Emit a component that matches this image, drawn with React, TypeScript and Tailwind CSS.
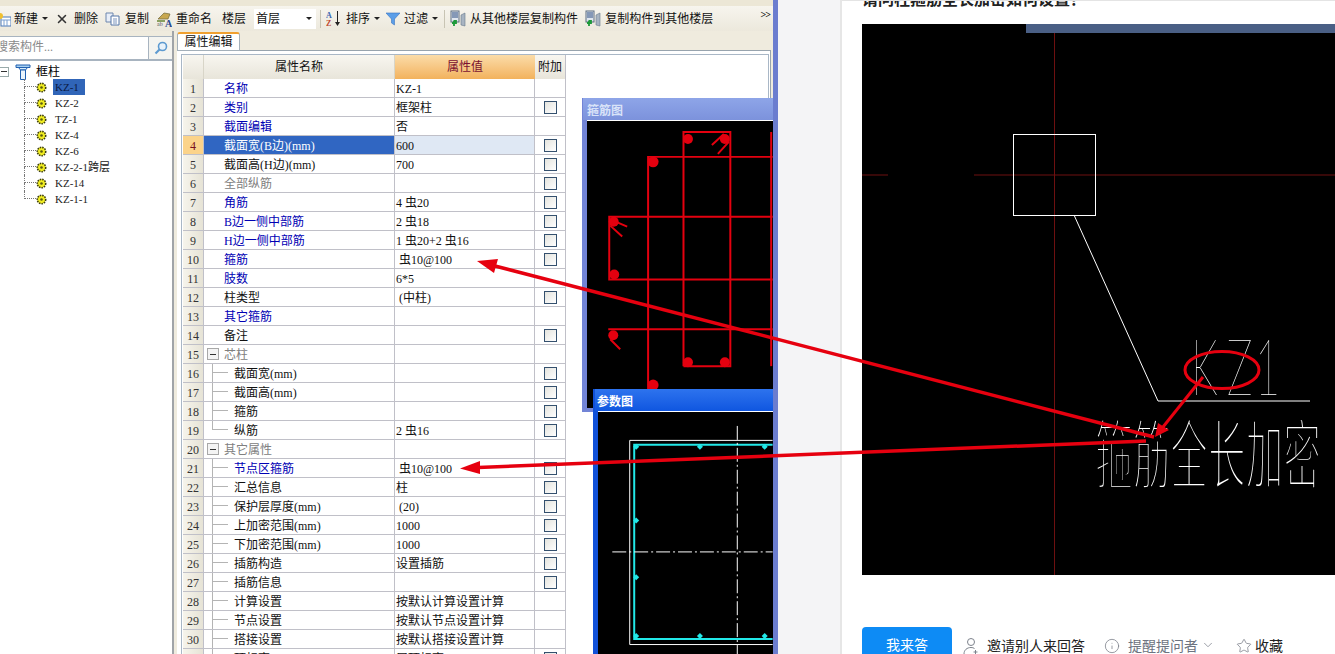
import React from 'react';
import { X, Info, ChevronDown, Star } from 'lucide-react';

const Caret = () => (
	<span className="w-0 h-0 border-x-[3px] border-x-transparent border-t-[3px] border-t-[#222] shrink-0" />
);

const NewIcon = () => (
	<svg width="14" height="16" viewBox="0 0 14 16" className="shrink-0">
		<rect x="4" y="6" width="10" height="9" fill="#fff" stroke="#4a78b8" />
		<path d="M4 9h10M7 9v6M10 9v6" stroke="#7aa0d0" />
		<circle cx="3" cy="5" r="3" fill="#f0c030" />
	</svg>
);

const CopyIcon = () => (
	<svg width="15" height="14" viewBox="0 0 15 14" className="shrink-0">
		<path d="M1 1h7v9H1z" fill="#e8eef8" stroke="#6c86ad" />
		<path d="M6 4h8v9H6z" fill="#fff" stroke="#5577a8" />
		<path d="M8 7h4M8 9h4M8 11h4" stroke="#7a94bd" />
	</svg>
);

const RenameIcon = () => (
	<svg width="16" height="16" viewBox="0 0 16 16" className="shrink-0">
		<path d="M2 8 L8 2 L14 3 L12 8 Z" fill="#c8a850" stroke="#70683a" strokeWidth="0.7" />
		<path d="M1 9h8v2H1z" fill="#8aa060" />
		<text x="1" y="15" fontSize="6" fill="#556">ab</text>
		<text x="9" y="16" fontSize="10" fontWeight="700" fill="#2a4a90">A</text>
	</svg>
);

const SortIcon = () => (
	<svg width="16" height="17" viewBox="0 0 16 17" className="shrink-0">
		<text x="0" y="8" fontSize="8" fontWeight="700" fill="#3a64b0">A</text>
		<text x="0" y="16" fontSize="8" fontWeight="700" fill="#c04a30">Z</text>
		<path d="M11.5 1v13" stroke="#222" />
		<path d="M9 12l2.5 4 2.5-4z" fill="#222" />
	</svg>
);

const FilterIcon = () => (
	<svg width="14" height="14" viewBox="0 0 14 14" className="shrink-0">
		<path d="M0 1h14L8.5 7v6l-3-2V7z" fill="#5b9ee8" stroke="#3a74c0" strokeWidth="0.6" />
	</svg>
);

const LayerCopyIcon = () => (
	<svg width="16" height="17" viewBox="0 0 16 17" className="shrink-0">
		<rect x="1" y="1" width="8" height="11" fill="#dfe6ee" stroke="#5c6c80" />
		<path d="M2 3h6M2 5h6M2 7h6" stroke="#2a4a80" />
		<path d="M11 5l4-2v13l-4 -1z" fill="#a8b4c2" stroke="#66788c" strokeWidth="0.6" />
		<path d="M2 13h4v-2l-2.500 0M4 11v5" stroke="#1d9a3a" strokeWidth="1.800" fill="none" />
	</svg>
);

const Gear = () => (
	<svg width="11" height="11" viewBox="0 0 11 11" className="shrink-0">
		<circle cx="5.500" cy="5.500" r="4.200" fill="#f2ee20" stroke="#3a3a10" strokeWidth="1.600" strokeDasharray="1.500 1" />
		<circle cx="5.500" cy="5.500" r="1.300" fill="#5a5a10" />
	</svg>
);

const treeItems = ['KZ-1', 'KZ-2', 'TZ-1', 'KZ-4', 'KZ-6', 'KZ-2-1跨层', 'KZ-14', 'KZ-1-1'];

const Tree = () => (
	<div className="pt-[3px]">
		<div className="flex items-center h-[15px] -ml-[1px]">
			<span className="w-[10px] h-[10px] border border-[#9aa] flex items-center justify-center shrink-0">
				<span className="w-[6px] h-px bg-[#333]" />
			</span>
			<svg width="16" height="16" viewBox="0 0 16 16" className="ml-[6px] shrink-0">
				<path d="M1 1h14v2.500H1z" fill="#a8d0f0" stroke="#1f5fb0" />
				<path d="M3.500 3.500h9L10.500 6h-5z" fill="#d8ecfa" stroke="#1f5fb0" />
				<path d="M5.500 6h5v9.500h-5z" fill="#eaf4fc" stroke="#1f5fb0" />
			</svg>
			<span className="ml-[5px] text-[12px] text-black">框柱</span>
		</div>
		{treeItems.map((name, i) => (
			<div key={name} className="flex items-center h-4 ml-[24px]">
				<span className="w-[12px] h-4 flex flex-col shrink-0">
					<span className="h-2 border-l border-b border-dotted border-[#777]" />
					{i < treeItems.length - 1 && <span className="h-2 border-l border-dotted border-[#777]" />}
				</span>
				<Gear />
				<span
					className={
						i === 0
							? 'ml-[6px] h-4 pl-[2px] pr-[6px] flex items-center text-[11px] bg-[#3065b8] text-[#0b1a44]'
							: 'ml-[6px] h-4 pl-[2px] flex items-center text-[11px] text-[#222]'
					}
				>
					{name}
				</span>
			</div>
		))}
	</div>
);

type RowData = {
	name: string;
	value?: string;
	tone?: 'blue' | 'black' | 'gray';
	check?: boolean;
	group?: boolean;
	child?: boolean;
	last?: boolean;
};

const rows: RowData[] = [
	{ name: '名称', value: 'KZ-1', tone: 'blue' },
	{ name: '类别', value: '框架柱', tone: 'blue', check: true },
	{ name: '截面编辑', value: '否', tone: 'blue' },
	{ name: '截面宽(B边)(mm)', value: '600', check: true },
	{ name: '截面高(H边)(mm)', value: '700', check: true },
	{ name: '全部纵筋', tone: 'gray', check: true },
	{ name: '角筋', value: '4 虫20', tone: 'blue', check: true },
	{ name: 'B边一侧中部筋', value: '2 虫18', tone: 'blue', check: true },
	{ name: 'H边一侧中部筋', value: '1 虫20+2 虫16', tone: 'blue', check: true },
	{ name: '箍筋', value: ' 虫10@100', tone: 'blue', check: true },
	{ name: '肢数', value: '6*5', tone: 'blue' },
	{ name: '柱类型', value: ' (中柱)', check: true },
	{ name: '其它箍筋', tone: 'blue' },
	{ name: '备注', check: true },
	{ name: '芯柱', tone: 'gray', group: true },
	{ name: '截面宽(mm)', child: true, check: true },
	{ name: '截面高(mm)', child: true, check: true },
	{ name: '箍筋', child: true, check: true },
	{ name: '纵筋', value: '2 虫16', child: true, check: true, last: true },
	{ name: '其它属性', tone: 'gray', group: true },
	{ name: '节点区箍筋', value: ' 虫10@100', tone: 'blue', child: true, check: true },
	{ name: '汇总信息', value: '柱', child: true, check: true },
	{ name: '保护层厚度(mm)', value: ' (20)', child: true, check: true },
	{ name: '上加密范围(mm)', value: '1000', child: true, check: true },
	{ name: '下加密范围(mm)', value: '1000', child: true, check: true },
	{ name: '插筋构造', value: '设置插筋', child: true, check: true },
	{ name: '插筋信息', child: true, check: true },
	{ name: '计算设置', value: '按默认计算设置计算', child: true },
	{ name: '节点设置', value: '按默认节点设置计算', child: true },
	{ name: '搭接设置', value: '按默认搭接设置计算', child: true },
	{ name: '顶标高(m)', value: '层顶标高', child: true, check: true },
];

const toneClass = { blue: 'text-[#0000b4]', black: 'text-[#111]', gray: 'text-[#808080]' };

const PropRow = ({ row, index }: { row: RowData; index: number }) => {
	const selected = index === 4;
	return (
		<div className="grid grid-cols-[21px_191px_140px_31px] grid-rows-[19px] h-[19px] text-[12px] leading-[18px]">
			<div
				className={
					selected
						? 'border-r border-b border-[#c0c0c8] bg-[#fbd38a] pt-px text-center text-[#7a1020]'
						: 'border-r border-b border-[#c0c0c8] bg-gradient-to-r from-[#f6f4ec] to-[#e6e3d6] pt-px text-center text-[#333]'
				}
			>
				{index}
			</div>
			<div
				className={
					selected
						? 'border-r border-b border-[#c0c0c8] bg-[#3066c2] text-white flex items-center pl-[20px]'
						: `border-r border-b border-[#c0c0c8] flex items-center ${toneClass[row.tone ?? 'black']} ${row.group || row.child ? '' : 'pl-[20px]'}`
				}
			>
				{row.group && (
					<span className="ml-[3px] mr-[5px] w-3 h-3 border border-[#a8a8a8] bg-[#f4f4f4] flex items-center justify-center shrink-0">
						<span className="w-[6px] h-px bg-[#333]" />
					</span>
				)}
				{row.child && (
					<span className="ml-[8px] mr-[6px] w-[16px] h-[18px] flex flex-col shrink-0">
						<span className="h-[9px] border-l border-b border-[#b4b4b4]" />
						{!row.last && <span className="h-[9px] border-l border-[#b4b4b4]" />}
					</span>
				)}
				<span className="whitespace-nowrap mt-[2px]">{row.name}</span>
			</div>
			<div
				className={
					selected
						? 'border-r border-b border-[#c0c0c8] bg-[#dfe8f4] pl-px pt-px whitespace-pre text-[#111]'
						: 'border-r border-b border-[#c0c0c8] pl-px pt-px whitespace-pre text-[#111]'
				}
			>
				{row.value}
			</div>
			<div className="border-r border-b border-[#c0c0c8] flex items-center justify-center">
				{row.check && (
					<span className="w-[13px] h-[13px] border border-[#34506e] bg-gradient-to-br from-[#e4e4de] to-white" />
				)}
			</div>
		</div>
	);
};

const StirrupWindow = () => (
	<div className="absolute left-[582px] top-[98px] w-[191px] h-[314px] bg-[#7284d6] pl-[5px] pb-[4px] overflow-hidden">
		<div className="h-[22px] -ml-[4px] pl-[4px] bg-gradient-to-b from-[#8ea5e8] to-[#7c92dc] text-[12px] leading-[26px] font-bold text-[#d8e2f8]">
			箍筋图
		</div>
		<svg width="186" height="288" viewBox="587 122 186 288" className="block bg-black border-t border-white">
			<g stroke="#e4000f" strokeWidth="2" fill="none">
				<path d="M773 158H648V395" />
				<path d="M771.500 133V368" />
				<path d="M683.500 368V133H730.500V368H683.500" strokeWidth="2" />
				<path d="M773 218H609V281H773" />
				<path d="M608 331H773" />
				<path d="M712 146L724 135M718 155L729 143M613 222L627 228M610 227L622 238M610 341L620 351" />
			</g>
			<g fill="#e4000f">
				<circle cx="688" cy="140" r="5" />
				<circle cx="725" cy="140" r="5" />
				<circle cx="653" cy="163" r="5.500" />
				<circle cx="613.500" cy="223" r="5" />
				<circle cx="614" cy="276" r="5" />
				<circle cx="613" cy="337" r="5" />
				<circle cx="688" cy="364" r="5" />
				<circle cx="725" cy="364" r="5" />
				<circle cx="653" cy="387" r="5.500" />
			</g>
		</svg>
	</div>
);

const ParamWindow = () => (
	<div className="absolute left-[593px] top-[389px] w-[180px] h-[265px] bg-[#1151d8] pl-[5px] overflow-hidden">
		<div className="h-[22px] -ml-[3px] pl-[2px] bg-gradient-to-b from-[#2d73ee] to-[#0f56e0] text-[12px] leading-[26px] font-bold text-white">
			参数图
		</div>
		<svg width="175" height="243" viewBox="598 411 175 243" className="block bg-black border-t border-white">
			<path d="M773 439.500H629.500V644.500H773" stroke="#fff" fill="none" />
			<path d="M773 444H634V639H773" stroke="#22e8e8" strokeWidth="2" fill="none" />
			<path d="M737.500 425V654" stroke="#fff" strokeDasharray="14 3 2 3" />
			<path d="M612 551.500H773" stroke="#fff" strokeDasharray="14 3 2 3" />
			<g fill="#22e8e8">
				<path d="M636 443l3 3-3 3-3-3z" />
				<path d="M700 443l3 3-3 3-3-3z" />
				<path d="M765 443l3 3-3 3-3-3z" />
				<path d="M636 517l3 3-3 3-3-3z" />
				<path d="M636 574l3 3-3 3-3-3z" />
				<path d="M636 633l3 3-3 3-3-3z" />
				<path d="M700 633l3 3-3 3-3-3z" />
				<path d="M765 633l3 3-3 3-3-3z" />
			</g>
		</svg>
	</div>
);

const Software = () => (
	<div className="relative w-[773px] shrink-0 flex flex-col bg-[#efebde] overflow-hidden">
		<div className="h-[6px] bg-[#ece7d6] shrink-0" />
		<div className="h-[25px] shrink-0 flex items-center text-[12px] text-[#111] whitespace-nowrap bg-gradient-to-b from-[#f7f5ee] to-[#ece8dc]">
			<span className="-ml-[3px] flex"><NewIcon /></span>
			<span className="ml-[3px]">新建</span>
			<span className="ml-[4px] flex"><Caret /></span>
			<X size={14} strokeWidth={2.6} className="ml-[7px] text-[#333] shrink-0" />
			<span className="ml-[5px]">删除</span>
			<span className="ml-[7px] flex"><CopyIcon /></span>
			<span className="ml-[5px]">复制</span>
			<span className="ml-[7px] flex"><RenameIcon /></span>
			<span className="ml-[4px]">重命名</span>
			<span className="ml-[10px]">楼层</span>
			<span className="ml-[8px] w-[62px] h-[20px] bg-white flex items-center justify-between pl-[2px] pr-[4px]">
				首层
				<Caret />
			</span>
			<span className="ml-[4px] w-px h-[18px] bg-[#c8c4b4]" />
			<span className="ml-[5px] flex"><SortIcon /></span>
			<span className="ml-[4px]">排序</span>
			<span className="ml-[4px] flex"><Caret /></span>
			<span className="ml-[6px] flex"><FilterIcon /></span>
			<span className="ml-[4px]">过滤</span>
			<span className="ml-[4px] flex"><Caret /></span>
			<span className="ml-[6px] w-px h-[18px] bg-[#c8c4b4]" />
			<span className="ml-[5px] flex"><LayerCopyIcon /></span>
			<span className="ml-[4px]">从其他楼层复制构件</span>
			<span className="ml-[7px] flex"><LayerCopyIcon /></span>
			<span className="ml-[4px]">复制构件到其他楼层</span>
			<span className="ml-auto mr-[3px] mb-[8px] text-[10px] font-bold leading-none tracking-[-1px]">&gt;&gt;</span>
		</div>
		<div className="flex-1 flex min-h-0">
			<div className="w-[174px] shrink-0 pt-[5px] flex flex-col border-r-2 border-[#a0a4a8]">
				<div className="h-[25px] shrink-0 flex border-t border-b-2 border-[#a8b4c0] bg-white">
					<div className="w-[149px] border-r border-[#a8b4c0] overflow-hidden text-[12px] leading-[20px] text-[#8a8a8a] whitespace-nowrap">
						<span className="-ml-[4px] inline-block">搜索构件...</span>
					</div>
					<div className="flex-1 flex items-center justify-center bg-[#f4f4f0]">
						<svg width="14" height="14" viewBox="0 0 14 14">
							<circle cx="8.500" cy="5.500" r="4" fill="#e8f2fa" stroke="#5d9ad0" strokeWidth="1.600" />
							<path d="M5.500 8.500L1.500 12.500" stroke="#5d9ad0" strokeWidth="2.200" />
						</svg>
					</div>
				</div>
				<div className="flex-1 bg-white overflow-hidden">
					<Tree />
				</div>
			</div>
			<div className="flex-1 ml-[3px] mr-[2px] pt-px flex flex-col min-w-0">
				<div className="w-[63px] h-[19px] shrink-0 -mb-px relative bg-white border border-[#a4b0ba] border-t-2 border-t-[#f0a030] rounded-t-[3px] text-[12px] leading-[16px] text-center text-[#111]">
					属性编辑
				</div>
				<div className="flex-1 bg-white border-t border-r border-[#98a4ae] pl-[4px] pr-px pt-[3px] min-h-0">
					<div className="h-full border-t border-x border-[#a9b7c6] pl-px">
						<div className="grid grid-cols-[21px_191px_140px_31px] grid-rows-[24px] h-[24px] text-[12px] leading-[25px] text-center">
							<div className="border-r border-[#d8d5c8] bg-gradient-to-b from-[#f8f6f0] to-[#e8e5da]" />
							<div className="border-r border-[#d8d5c8] bg-gradient-to-b from-[#f8f6f0] to-[#e8e5da] text-[#111]">属性名称</div>
							<div className="bg-gradient-to-b from-[#fbdca8] to-[#f2b25c] text-[#7a1030]">属性值</div>
							<div className="border-r border-[#c0c0c8] bg-gradient-to-b from-[#f8f6f0] to-[#e8e5da] text-[#111]">附加</div>
						</div>
						{rows.map((row, i) => (
							<PropRow key={i} row={row} index={i + 1} />
						))}
					</div>
				</div>
			</div>
		</div>
		<StirrupWindow />
		<ParamWindow />
	</div>
);

const CadPicture = () => (
	<div className="relative w-[473px] h-[551px] bg-black overflow-hidden shrink-0">
		<div className="ml-[164px] h-[9px] bg-[#4a5f85]" />
		<svg width="473" height="551" viewBox="862 24 473 551" className="absolute left-0 top-0">
			<path d="M1054.500 33V575" stroke="#6e1010" />
			<path d="M862 175H888M974 175H1335" stroke="#6e1010" />
			<rect x="1013.500" y="134.500" width="82" height="81" fill="none" stroke="#fff" />
			<path d="M1074 215L1158 401H1310" fill="none" stroke="#fff" />
			<text
				transform="translate(1190 395) scale(0.55 1)"
				x="2 67 118"
				fontFamily="Lato, Inter, sans-serif"
				fontWeight="200"
				fontSize="79"
				fill="#fff"
			>
				KZ1
			</text>
			<text
				transform="translate(1095 483) scale(1 2)"
				fontFamily="'Noto Sans CJK SC', sans-serif"
				fontSize="38"
				fill="#fff"
				stroke="#000"
				strokeWidth="2"
				textLength="226"
				lengthAdjust="spacingAndGlyphs"
			>
				箍筋全长加密
			</text>
		</svg>
	</div>
);

const Question = () => (
	<div className="flex-1 min-w-0 flex flex-col px-[20px] bg-white border-t border-[#e4e4e4] overflow-hidden">
		<div className="h-[23px] shrink-0 overflow-hidden">
			<div className="-mt-[13px] text-[16px] leading-[24px] font-bold text-[#222] whitespace-nowrap">
				请问柱箍筋全长加密如何设置？
			</div>
		</div>
		<CadPicture />
		<div className="mt-[52px] flex items-start text-[14px] whitespace-nowrap">
			<button className="w-[90px] h-[36px] rounded-[4px] bg-[#0d8bf5] text-white shrink-0">我来答</button>
			<svg width="16" height="18" viewBox="0 0 16 18" fill="none" stroke="#7d828c" className="ml-[11px] mt-[10px] shrink-0">
				<circle cx="8" cy="5" r="3.500" />
				<path d="M1 17c0-4 3-6.500 7-6.500 1.500 0 2.500.3 3.500 1" />
				<path d="M12.500 13v4M10.500 15h4" />
			</svg>
			<span className="ml-[8px] mt-[9px] text-[#222]">邀请别人来回答</span>
			<Info size={16} strokeWidth={1.2} className="ml-[19px] mt-[11px] text-[#7d828c] shrink-0" />
			<span className="ml-[8px] mt-[9px] text-[#6d7380]">提醒提问者</span>
			<ChevronDown size={14} strokeWidth={1.3} className="ml-[3px] mt-[11px] text-[#7d828c] shrink-0" />
			<Star size={16} strokeWidth={1.2} className="ml-[21px] mt-[11px] text-[#7d828c] shrink-0" />
			<span className="ml-[3px] mt-[9px] text-[#222]">收藏</span>
		</div>
	</div>
);

const Arrows = () => (
	<svg width="1335" height="654" viewBox="0 0 1335 654" className="absolute left-0 top-0 pointer-events-none">
		<g stroke="#e6000f" fill="none">
			<path d="M495 266L1154 437" strokeWidth="3.500" />
			<path d="M478 467.500L1146 441" strokeWidth="3.500" />
			<path d="M1203 377L1163 427" strokeWidth="3" />
			<ellipse cx="1222" cy="370" rx="37" ry="18.500" strokeWidth="3" />
		</g>
		<g fill="#e6000f">
			<path d="M477 261L498 259L494 273Z" />
			<path d="M460 468.500L480 461L480 474Z" />
			<path d="M1155 437L1158 423L1169 430Z" />
		</g>
	</svg>
);

const App = () => {
	return (
		<div className="relative w-[1335px] h-[654px] overflow-hidden flex bg-white font-['Liberation_Serif','Noto_Sans_CJK_SC',serif]">
			<Software />
			<div className="w-[5px] shrink-0 bg-[#6b7dcf]" />
			<div className="w-[62px] shrink-0 bg-[#f4f4f6]" />
			<div className="w-[2px] shrink-0 bg-[#e6e6e6]" />
			<Question />
			<Arrows />
		</div>
	);
};

export default App;
